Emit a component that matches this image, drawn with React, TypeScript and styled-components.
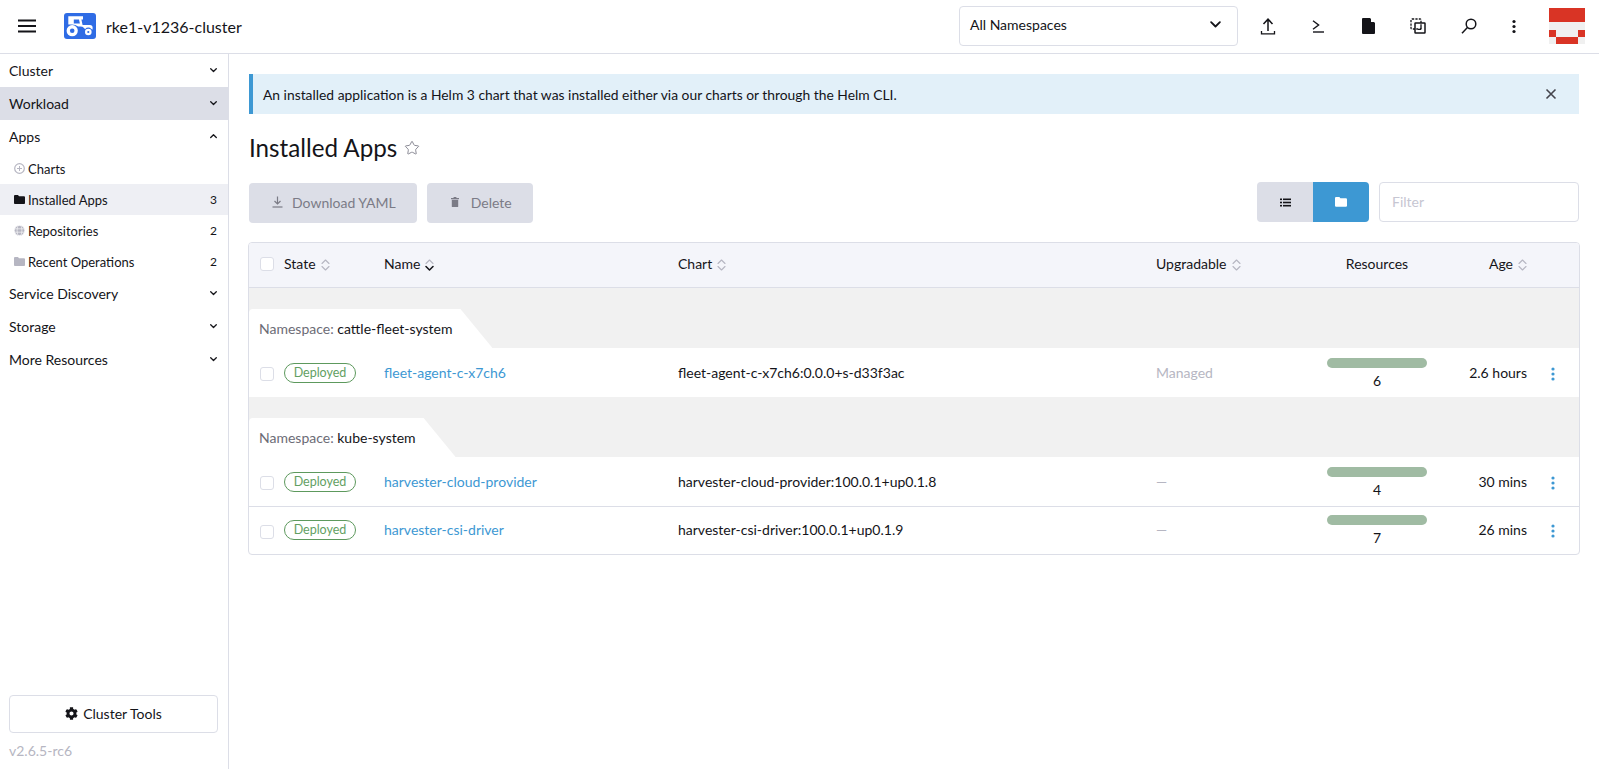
import React from 'react';
import styled, { createGlobalStyle } from 'styled-components';
import { Star } from 'lucide-react';
import { FaCog } from 'react-icons/fa';

const C = {
  text: '#141419',
  border: '#dcdee7',
  muted: '#b6b6c2',
  soft: '#6c6c76',
  link: '#3d98d3',
  band: '#f1f1f1',
  head: '#f4f5fa',
};

const Global = createGlobalStyle`
  html, body { margin: 0; padding: 0; background: #fff; }
  body { font-family: Lato, "Open Sans", "Liberation Sans", sans-serif; font-size: 14px; color: ${C.text}; }
  * { box-sizing: border-box; }
`;

const Page = styled.div`
  display: grid;
  grid-template-rows: 54px 1fr;
  grid-template-columns: 229px 1fr;
  height: 100vh;
  overflow: hidden;
`;

const Header = styled.header`
  grid-column: 1 / 3;
  display: flex;
  align-items: center;
  height: 54px;
  padding: 0 14px 1px 18px;
  border-bottom: 1px solid ${C.border};
`;

const Burger = styled.svg`
  width: 18px;
  height: 14px;
  flex: none;
  display: block;
`;

const Logo = styled.svg`
  width: 32px;
  height: 26px;
  margin-left: 28px;
  flex: none;
  display: block;
`;

const ClusterName = styled.div`
  margin-left: 10px;
  font-size: 16px;
`;

const NamespaceSelect = styled.div`
  margin-left: auto;
  margin-right: 5px;
  width: 279px;
  height: 40px;
  display: flex;
  align-items: center;
  justify-content: space-between;
  padding: 0 16px 3px 10px;
  border: 1px solid ${C.border};
  border-radius: 4px;
`;

const TopIcon = styled.div<{ $w?: number }>`
  width: ${p => p.$w ?? 50}px;
  height: 40px;
  display: flex;
  align-items: center;
  justify-content: center;
  flex: none;
`;

const Avatar = styled.svg`
  width: 36px;
  height: 36px;
  margin-left: 15px;
  flex: none;
  display: block;
`;

const Sidebar = styled.aside`
  display: flex;
  flex-direction: column;
  border-right: 1px solid ${C.border};
`;

const GroupHead = styled.div<{ $active?: boolean }>`
  height: 33px;
  display: flex;
  align-items: center;
  justify-content: space-between;
  padding: 0 11px 0 9px;
  background: ${p => (p.$active ? C.border : 'transparent')};
`;

const Item = styled.div<{ $active?: boolean }>`
  height: 31px;
  display: flex;
  align-items: center;
  padding: 0 11px 0 14px;
  font-size: 13px;
  background: ${p => (p.$active ? '#eeeff4' : 'transparent')};
`;

const ItemLabel = styled.span`
  margin-left: 3px;
  flex: 1;
`;

const ItemCount = styled.span`
  font-size: 12px;
`;

const SideFooter = styled.div`
  margin-top: auto;
  padding: 0 10px 8px 9px;
`;

const ToolsButton = styled.div`
  height: 38px;
  display: flex;
  align-items: center;
  justify-content: center;
  gap: 5px;
  padding-bottom: 2px;
  border: 1px solid ${C.border};
  border-radius: 4px;
  font-size: 14px;
`;

const Version = styled.div`
  margin-top: 7px;
  color: ${C.muted};
  line-height: 21px;
`;

const Main = styled.main`
  padding: 20px 20px 0;
  min-width: 0;
`;

const Banner = styled.div`
  height: 40px;
  display: flex;
  align-items: center;
  justify-content: space-between;
  padding: 0 22px 0 10px;
  background: #e2f0f9;
  border-left: 4px solid ${C.link};
  font-size: 13.85px;
`;

const TitleRow = styled.div`
  display: flex;
  align-items: center;
  gap: 7px;
  height: 36px;
  margin-top: 16px;
`;

const Title = styled.h1`
  margin: 0;
  font-size: 24.2px;
  font-weight: 400;
  line-height: 36px;
`;

const Toolbar = styled.div`
  display: flex;
  justify-content: space-between;
  margin-top: 16px;
`;

const BulkGroup = styled.div`
  display: flex;
  gap: 10px;
  margin-top: 1px;
`;

const BulkButton = styled.div`
  height: 40px;
  display: flex;
  align-items: center;
  gap: 9px;
  padding: 0 21px 2px 23px;
  background: ${C.border};
  border-radius: 4px;
  color: #7b7b86;
`;

const DeleteButton = styled(BulkButton)`
  gap: 12px;
  padding: 0 21px 2px 24px;
`;

const ToolsRight = styled.div`
  display: flex;
  gap: 10px;
`;

const Toggle = styled.div`
  display: flex;
  height: 40px;
  border-radius: 4px;
  overflow: hidden;
`;

const ToggleButton = styled.div<{ $on?: boolean }>`
  width: 56px;
  display: flex;
  align-items: center;
  justify-content: center;
  background: ${p => (p.$on ? C.link : C.border)};
`;

const FilterInput = styled.input`
  width: 200px;
  height: 40px;
  padding: 0 12px 2px;
  border: 1px solid ${C.border};
  border-radius: 4px;
  font: inherit;
  outline: none;
  &::placeholder { color: #c6c6d2; }
`;

const TableBox = styled.div`
  margin: 19px -1px 0;
  border: 1px solid ${C.border};
  border-radius: 4px;
  overflow: hidden;
`;

const Grid = styled.table`
  width: 100%;
  table-layout: fixed;
  border-collapse: separate;
  border-spacing: 0;
`;

const HeadCell = styled.th<{ $align?: string; $pr?: number; $pl?: number }>`
  height: 45px;
  padding: 0 ${p => p.$pr ?? 0}px 3px ${p => p.$pl ?? 0}px;
  background: ${C.head};
  border-bottom: 1px solid ${C.border};
  font-weight: 400;
  text-align: ${p => p.$align ?? 'left'};
  white-space: nowrap;
`;

const HeadLabel = styled.span`
  display: inline-flex;
  align-items: center;
  gap: 5px;
`;

const Sort = styled.svg`
  width: 9px;
  height: 14px;
  margin-top: 2px;
  display: block;
`;

const Box = styled.span`
  display: block;
  width: 14px;
  height: 14px;
  background: #fff;
  border: 1px solid ${C.border};
  border-radius: 3px;
`;

const RowBox = styled(Box)`
  margin-top: 3px;
`;

const BandCell = styled.td`
  padding: 21px 0 0;
  background: ${C.band};
`;

const Tab = styled.div`
  display: inline-block;
  vertical-align: bottom;
  height: 39px;
  line-height: 40px;
  padding: 0 40px 0 10px;
  background: #fff;
  border-top-left-radius: 4px;
  clip-path: polygon(0 0, calc(100% - 32px) 0, 100% 100%, 0 100%);
  color: ${C.soft};
  font-size: 14px;
`;

const TabValue = styled.span`
  color: ${C.text};
`;

const Row = styled.tr<{ $h: number }>`
  height: ${p => p.$h}px;
`;

const Cell = styled.td<{ $line?: boolean; $pl?: number; $pr?: number; $pb?: number; $align?: string }>`
  padding: 0 ${p => p.$pr ?? 0}px ${p => p.$pb ?? 0}px ${p => p.$pl ?? 0}px;
  border-bottom: ${p => (p.$line ? `1px solid ${C.border}` : 'none')};
  text-align: ${p => p.$align ?? 'left'};
  font-size: 14px;
  white-space: nowrap;
`;

const Badge = styled.span`
  display: block;
  width: 72px;
  height: 20px;
  line-height: 18px;
  text-align: center;
  border: 1px solid #5d995d;
  border-radius: 10px;
  color: #62a062;
  font-size: 12.5px;
`;

const AppLink = styled.a`
  color: ${C.link};
`;

const Muted = styled.span`
  color: ${C.muted};
`;

const Resource = styled.div`
  width: 100px;
  height: 29px;
  margin: 0 auto;
  display: flex;
  flex-direction: column;
  align-items: center;
`;

const Bar = styled.div`
  width: 100%;
  height: 10px;
  flex: none;
  border-radius: 5px;
  background: #a0bba3;
`;

const Count = styled.div`
  flex: none;
  margin-top: 3px;
  line-height: 20px;
  font-size: 14px;
`;

const Dots = styled.svg`
  width: 4px;
  height: 14px;
  display: inline-block;
  vertical-align: middle;
`;

const Chevron = ({ up, size = 7, sw = 1.3 }: { up?: boolean; size?: number; sw?: number }) => (
  <svg width={size} height={size * 0.6} viewBox="0 0 10 6" fill="none" stroke={C.text} strokeWidth={sw * (10 / size)} strokeLinecap="round" strokeLinejoin="round">
    <path d={up ? 'M1 5 L5 1 L9 5' : 'M1 1 L5 5 L9 1'} />
  </svg>
);

const SortIcon = ({ active }: { active?: boolean }) => (
  <Sort viewBox="0 0 9 14" fill="none" strokeWidth="1.1" strokeLinecap="round" strokeLinejoin="round">
    <path d="M1 5.5 L4.5 2 L8 5.5" stroke={C.muted} />
    <path d="M1 8.5 L4.5 12 L8 8.5" stroke={active ? C.text : C.muted} strokeWidth={active ? 1.5 : 1.1} />
  </Sort>
);

const FolderIcon = ({ color, w = 11 }: { color: string; w?: number }) => (
  <svg width={w} height={w * 0.82} viewBox="0 0 11 9" fill={color}>
    <path d="M0 1 Q0 0 1 0 H4 L5 1.2 H10 Q11 1.2 11 2.2 V8 Q11 9 10 9 H1 Q0 9 0 8 Z" />
  </svg>
);

const SideGroup = ({ label, open, active }: { label: string; open?: boolean; active?: boolean }) => (
  <GroupHead $active={active}>
    <span>{label}</span>
    <Chevron up={open} />
  </GroupHead>
);

const UploadIcon = () => (
  <svg width="16" height="17" viewBox="0 0 16 17" fill="none" stroke={C.text} strokeWidth="1.5">
    <path d="M8 13 V1.5 M3.5 6 L8 1.2 L12.5 6" />
    <path d="M1.5 13 V15.8 H14.5 V13" strokeWidth="1.3" />
  </svg>
);

const TerminalIcon = () => (
  <svg width="12" height="13" viewBox="0 0 12 13" fill="none" stroke={C.text} strokeWidth="1.4">
    <path d="M1 0.8 L6.6 5 L1 9.2" />
    <path d="M1 12 H12" />
  </svg>
);

const FileIcon = () => (
  <svg width="13" height="16" viewBox="0 0 13 16" fill={C.text}>
    <path d="M1 0 H8 L13 5 V15 Q13 16 12 16 H1 Q0 16 0 15 V1 Q0 0 1 0 Z" />
    <path d="M9 0 L13 4 H9 Z" fill="#fff" />
  </svg>
);

const CopyIcon = () => (
  <svg width="16" height="16" viewBox="0 0 16 16" fill="none" stroke={C.text}>
    <rect x="1" y="1" width="10" height="10" rx="1" strokeDasharray="2.2 1.2" strokeWidth="1.3" />
    <rect x="5" y="5" width="10" height="10" rx="0.5" strokeWidth="1.5" />
    <path d="M8 11.5 H11 V8" strokeWidth="1" />
  </svg>
);

const SearchIcon = () => (
  <svg width="16" height="16" viewBox="0 0 16 16" fill="none" stroke={C.text} strokeWidth="1.5">
    <circle cx="10" cy="6" r="4.8" />
    <path d="M6.4 9.6 L1 15.2" />
  </svg>
);

const DotsIcon = ({ color, h = 14, w = 4 }: { color: string; h?: number; w?: number }) => (
  <Dots viewBox="0 0 4 14" fill={color} style={{ width: w, height: h }}>
    <circle cx="2" cy="2" r="1.6" />
    <circle cx="2" cy="7" r="1.6" />
    <circle cx="2" cy="12" r="1.6" />
  </Dots>
);

const Group = ({ ns }: { ns: string }) => (
  <tr>
    <BandCell colSpan={8}>
      <Tab>
        Namespace: <TabValue>{ns}</TabValue>
      </Tab>
    </BandCell>
  </tr>
);

const AppRow = ({ name, chart, upgrade, count, age, h, line, pb }: { name: string; chart: string; upgrade: string; count: number; age: string; h: number; line?: boolean; pb?: number }) => (
  <Row $h={h}>
    <Cell $line={line} $pl={11}><RowBox /></Cell>
    <Cell $line={line} $pb={pb}><Badge>Deployed</Badge></Cell>
    <Cell $line={line} $pb={pb}><AppLink>{name}</AppLink></Cell>
    <Cell $line={line} $pb={pb}>{chart}</Cell>
    <Cell $line={line} $pb={pb}><Muted>{upgrade}</Muted></Cell>
    <Cell $line={line} $pb={pb}>
      <Resource>
        <Bar />
        <Count>{count}</Count>
      </Resource>
    </Cell>
    <Cell $line={line} $pb={pb} $align="right" $pr={8}>{age}</Cell>
    <Cell $line={line} $pb={pb} $align="center" $pr={8}><DotsIcon color={C.link} /></Cell>
  </Row>
);

const widths = [35, 100, 294, 478, 150, 142, 87, 44];

export default function App() {
  return (
    <Page>
      <Global />
      <Header>
        <Burger viewBox="0 0 18 14" fill={C.text}>
          <rect y="0.5" width="18" height="2" />
          <rect y="6" width="18" height="2" />
          <rect y="11.5" width="18" height="2" />
        </Burger>
        <Logo viewBox="0 0 32 26">
          <rect width="32" height="26" rx="3" fill="#2f6ce5" />
          <path d="M4.3 3.3 H19 V6.6 H17.4 L18.6 12 H26 Q28.6 12 28.6 14.6 V16.4 H21.4 L20 15 Q18.6 13.6 16.5 13.6 H14.2 Q11.5 11.4 8 11.4 H4.3 Z M9.8 6.6 V10.4 H15.9 L15 6.6 Z" fill="#fff" fillRule="evenodd" />
          <circle cx="8.2" cy="17.7" r="5.6" fill="#fff" />
          <circle cx="8.2" cy="17.7" r="2.3" fill="#2f6ce5" />
          <circle cx="24.3" cy="19" r="4.4" fill="#2f6ce5" />
          <circle cx="24.3" cy="19" r="3.3" fill="#fff" />
          <circle cx="24.3" cy="19" r="1.1" fill="#2f6ce5" />
        </Logo>
        <ClusterName>rke1-v1236-cluster</ClusterName>
        <NamespaceSelect>
          <span>All Namespaces</span>
          <Chevron size={11} sw={1.8} />
        </NamespaceSelect>
        <TopIcon><UploadIcon /></TopIcon>
        <TopIcon><TerminalIcon /></TopIcon>
        <TopIcon><FileIcon /></TopIcon>
        <TopIcon><CopyIcon /></TopIcon>
        <TopIcon $w={51}><SearchIcon /></TopIcon>
        <TopIcon $w={40}><DotsIcon color={C.text} h={15} /></TopIcon>
        <Avatar viewBox="0 0 5 5" shapeRendering="crispEdges">
          <rect width="5" height="5" fill="#f0f0f0" />
          <rect width="5" height="2" fill="#d93425" />
          <rect y="3" width="1" height="1" fill="#d93425" />
          <rect x="4" y="3" width="1" height="1" fill="#d93425" />
          <rect x="1" y="4" width="3" height="1" fill="#d93425" />
        </Avatar>
      </Header>
      <Sidebar>
        <SideGroup label="Cluster" />
        <SideGroup label="Workload" active />
        <SideGroup label="Apps" open />
        <Item>
          <svg width="11" height="11" viewBox="0 0 11 11" fill="none" stroke={C.muted}>
            <circle cx="5.5" cy="5.5" r="4.8" strokeWidth="1.2" />
            <path d="M5.5 3 V8 M3 5.5 H8" strokeWidth="1" />
          </svg>
          <ItemLabel>Charts</ItemLabel>
        </Item>
        <Item $active>
          <FolderIcon color={C.text} />
          <ItemLabel>Installed Apps</ItemLabel>
          <ItemCount>3</ItemCount>
        </Item>
        <Item>
          <svg width="11" height="11" viewBox="0 0 11 11" fill={C.muted} stroke="#fff" strokeWidth="0.6">
            <circle cx="5.5" cy="5.5" r="5.2" />
            <ellipse cx="5.5" cy="5.5" rx="2.4" ry="5.2" fill="none" />
            <path d="M0.5 3.8 H10.5 M0.5 7.2 H10.5" />
          </svg>
          <ItemLabel>Repositories</ItemLabel>
          <ItemCount>2</ItemCount>
        </Item>
        <Item>
          <FolderIcon color={C.muted} />
          <ItemLabel>Recent Operations</ItemLabel>
          <ItemCount>2</ItemCount>
        </Item>
        <SideGroup label="Service Discovery" />
        <SideGroup label="Storage" />
        <SideGroup label="More Resources" />
        <SideFooter>
          <ToolsButton>
            <FaCog size={13} />
            <span>Cluster Tools</span>
          </ToolsButton>
          <Version>v2.6.5-rc6</Version>
        </SideFooter>
      </Sidebar>
      <Main>
        <Banner>
          <span>An installed application is a Helm 3 chart that was installed either via our charts or through the Helm CLI.</span>
          <svg width="12" height="12" viewBox="0 0 12 12" fill="none" stroke="#44444c" strokeWidth="1.6">
            <path d="M1.5 1.5 L10.5 10.5 M10.5 1.5 L1.5 10.5" />
          </svg>
        </Banner>
        <TitleRow>
          <Title>Installed Apps</Title>
          <Star size={16} color="#8b8b96" strokeWidth={1.5} />
        </TitleRow>
        <Toolbar>
          <BulkGroup>
            <BulkButton>
              <svg width="11" height="12" viewBox="0 0 11 12" fill="none" stroke="#7b7b86" strokeWidth="1.2">
                <path d="M5.5 0.5 V8 M2.5 5 L5.5 8 L8.5 5" />
                <path d="M0.5 11 H10.5" />
              </svg>
              <span>Download YAML</span>
            </BulkButton>
            <DeleteButton>
              <svg width="8" height="10" viewBox="0 0 8 10" fill="#7b7b86">
                <rect x="0" y="1" width="8" height="1.2" />
                <rect x="2.6" y="0" width="2.8" height="1.2" />
                <path d="M0.8 2.8 H7.2 V9.4 Q7.2 10 6.6 10 H1.4 Q0.8 10 0.8 9.4 Z" />
              </svg>
              <span>Delete</span>
            </DeleteButton>
          </BulkGroup>
          <ToolsRight>
            <Toggle>
              <ToggleButton>
                <svg width="11" height="9" viewBox="0 0 11 9" fill={C.text}>
                  <rect y="0.5" width="2" height="1.6" />
                  <rect x="3" y="0.5" width="8" height="1.6" />
                  <rect y="3.7" width="2" height="1.6" />
                  <rect x="3" y="3.7" width="8" height="1.6" />
                  <rect y="6.9" width="2" height="1.6" />
                  <rect x="3" y="6.9" width="8" height="1.6" />
                </svg>
              </ToggleButton>
              <ToggleButton $on>
                <FolderIcon color="#fff" w={12} />
              </ToggleButton>
            </Toggle>
            <FilterInput placeholder="Filter" />
          </ToolsRight>
        </Toolbar>
        <TableBox>
          <Grid>
            <colgroup>
              {widths.map((w, i) => (
                <col key={i} style={{ width: w }} />
              ))}
            </colgroup>
            <thead>
              <tr>
                <HeadCell $pl={11}><Box /></HeadCell>
                <HeadCell><HeadLabel>State <SortIcon /></HeadLabel></HeadCell>
                <HeadCell><HeadLabel>Name <SortIcon active /></HeadLabel></HeadCell>
                <HeadCell><HeadLabel>Chart <SortIcon /></HeadLabel></HeadCell>
                <HeadCell><HeadLabel>Upgradable <SortIcon /></HeadLabel></HeadCell>
                <HeadCell $align="center">Resources</HeadCell>
                <HeadCell $align="right" $pr={8}><HeadLabel>Age <SortIcon /></HeadLabel></HeadCell>
                <HeadCell />
              </tr>
            </thead>
            <tbody>
              <Group ns="cattle-fleet-system" />
              <AppRow name="fleet-agent-c-x7ch6" chart="fleet-agent-c-x7ch6:0.0.0+s-d33f3ac" upgrade="Managed" count={6} age="2.6 hours" h={49} />
              <Group ns="kube-system" />
              <AppRow name="harvester-cloud-provider" chart="harvester-cloud-provider:100.0.1+up0.1.8" upgrade="—" count={4} age="30 mins" h={50} line />
              <AppRow name="harvester-csi-driver" chart="harvester-csi-driver:100.0.1+up0.1.9" upgrade="—" count={7} age="26 mins" h={47} pb={2} />
            </tbody>
          </Grid>
        </TableBox>
      </Main>
    </Page>
  );
}
